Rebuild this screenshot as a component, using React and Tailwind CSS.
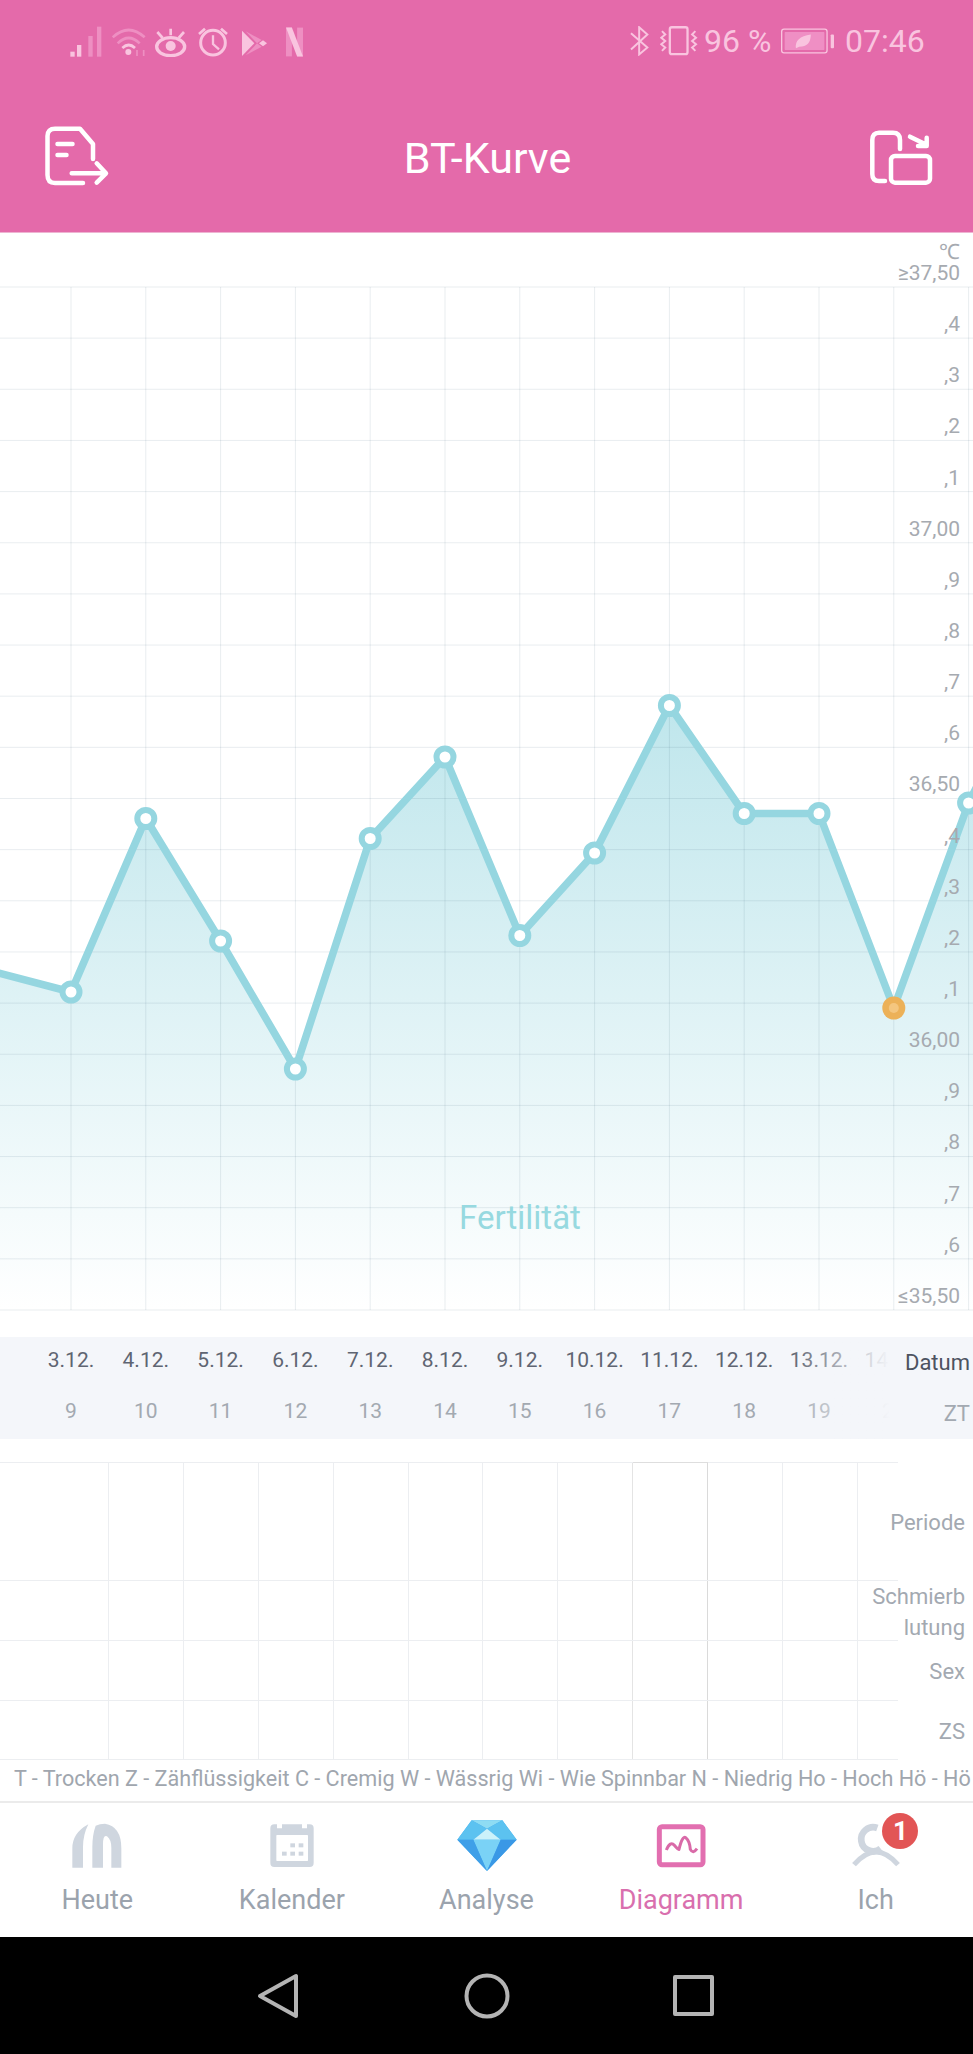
import React from "react";

const vx = Array.from({ length: 13 }, (_, i) => 71 + 74.8 * i);
const hy = Array.from({ length: 21 }, (_, i) => 287 + 51.15 * i);
const pts = [
  [-5, 972],
  [71, 992],
  [145.8, 818.5],
  [220.6, 941],
  [295.4, 1069],
  [370.2, 838.5],
  [445, 757],
  [519.8, 935.5],
  [594.6, 853],
  [669.4, 705.5],
  [744.2, 813.5],
  [819, 813.5],
  [893.8, 1008],
  [968.6, 803],
  [985, 770],
];
const line = pts.map((p) => p.join(",")).join(" ");
const area = `-5,1310 ${line} 985,1310`;

const yLabels = ["≥37,50", ",4", ",3", ",2", ",1", "37,00", ",9", ",8", ",7", ",6", "36,50", ",4", ",3", ",2", ",1", "36,00", ",9", ",8", ",7", ",6", "≤35,50"];
const dates = ["3.12.", "4.12.", "5.12.", "6.12.", "7.12.", "8.12.", "9.12.", "10.12.", "11.12.", "12.12.", "13.12.", "14.12."];
const days = ["9", "10", "11", "12", "13", "14", "15", "16", "17", "18", "19", "20"];
const tableRows = [
  { h: "h-[119px]", top: true },
  { h: "h-[60px]" },
  { h: "h-[60px]" },
  { h: "h-[59px]" },
];
const cells = Array.from({ length: 10 }, (_, i) => i);

function StatusLeft() {
  const c = "#f9c4df";
  const f = "#ee8fc2";
  return (
    <div className="flex items-center ml-[70px]">
      <svg width="32" height="31" viewBox="30 28 96 93">
        <rect x="31" y="105" width="13" height="15" fill={c} />
        <rect x="51" y="85" width="13" height="35" fill={c} />
        <rect x="85" y="58" width="13" height="62" fill={f} />
        <rect x="111" y="30" width="13" height="90" fill={f} />
      </svg>
      <svg className="ml-[10px]" width="35" height="31" viewBox="155 28 105 93" fill="none">
        <path d="M157 62 Q205 18 253 62" stroke={f} strokeWidth="8" />
        <path d="M172 80 Q205 48 238 80" stroke={f} strokeWidth="8" />
        <path d="M186 94 Q205 76 224 94" stroke={c} strokeWidth="8" />
        <circle cx="204" cy="106" r="9" fill={c} />
        <path d="M230 100 V118 M250 100 V118" stroke={f} strokeWidth="5" />
      </svg>
      <svg className="ml-[8px]" width="32" height="31" viewBox="285 28 96 93" fill="none" stroke={c}>
        <ellipse cx="332" cy="90" rx="42" ry="27" strokeWidth="10" />
        <circle cx="332" cy="88" r="15" fill={c} stroke="none" />
        <path d="M332 36 V56 M292 46 L308 64 M372 46 L356 64" strokeWidth="8" />
      </svg>
      <svg className="ml-[11px]" width="30" height="31" viewBox="415 28 90 93" fill="none" stroke={c}>
        <circle cx="460" cy="78" r="37" strokeWidth="9" />
        <path d="M460 56 V82 L478 98" strokeWidth="7" />
        <path d="M418 52 L436 36 M502 52 L484 36" strokeWidth="8" />
      </svg>
      <svg className="ml-[14px]" width="25" height="31" viewBox="545 28 75 93">
        <path d="M545 42 L582 80 L545 118 Z" fill={c} />
        <path d="M556 44 L604 70 L590 80 Z" fill={f} />
        <path d="M556 116 L604 90 L590 80 Z" fill={f} />
        <path d="M596 80 L608 71 L620 80 L608 89 Z" fill={c} />
      </svg>
      <svg className="ml-[19px]" width="17" height="31" viewBox="678 28 52 93">
        <rect x="678" y="32" width="18" height="88" fill={f} />
        <rect x="712" y="32" width="18" height="88" fill={f} />
        <path d="M678 32 H696 L730 120 H712 Z" fill={c} />
      </svg>
    </div>
  );
}

function StatusRight() {
  const c = "#f9c4df";
  return (
    <div className="flex items-center mr-[49px] text-[#f9c4df] text-[32px] leading-none">
      <svg width="19" height="30" viewBox="32 38 58 88" fill="none" stroke={c} strokeWidth="6">
        <path d="M35 58 L85 102 L60 123 V40 L85 62 L35 108" />
      </svg>
      <svg className="ml-[11px]" width="38" height="30" viewBox="122 35 116 90" fill="none" stroke={c}>
        <rect x="152" y="38" width="54" height="82" rx="6" strokeWidth="7" />
        <path d="M128 50 L138 60 L126 70 L138 80 L126 90 L138 100 L128 110" strokeWidth="6" />
        <path d="M230 50 L220 60 L232 70 L220 80 L232 90 L220 100 L230 110" strokeWidth="6" />
      </svg>
      <span className="ml-[6px] w-[66px] whitespace-nowrap">96 %</span>
      <svg className="ml-[11px]" width="53" height="26" viewBox="485 40 160 76" fill="none">
        <rect x="487" y="42" width="137" height="72" rx="7" stroke={c} strokeWidth="4" />
        <rect x="496" y="51" width="120" height="54" rx="2" fill="#ef8fc4" />
        <path d="M530 100 Q525 65 575 58 Q575 95 540 95 Z" fill={c} />
        <rect x="635" y="58" width="10" height="42" rx="3" fill={c} />
      </svg>
      <span className="ml-[11px] w-[79px] whitespace-nowrap">07:46</span>
    </div>
  );
}

function Header() {
  return (
    <div className="h-[233px] bg-[#e46aaa] flex flex-col border-b border-[#eeb4d2]">
      <div className="h-[82px] flex items-center justify-between">
        <StatusLeft />
        <StatusRight />
      </div>
      <div className="flex-1 flex items-center justify-between pl-[30px] pr-[28px] pt-[2px]">
        <svg width="90" height="85" viewBox="0 0 90 85" fill="none" stroke="#fff" strokeWidth="4.5" strokeLinecap="round" strokeLinejoin="round">
          <path d="M53 67 H25 Q17.5 67 17.5 59 V20 Q17.5 12.7 25 12.7 H50 L63 28 V43" />
          <path d="M27.5 28 H42.5 M27.5 39 H36.5" />
          <path d="M41.7 57.3 H75 M66.7 47.3 L76 57.3 L66.7 66.7" />
        </svg>
        <span className="text-white text-[43px] leading-none pt-[1px]">BT-Kurve</span>
        <svg width="90" height="85" viewBox="0 0 90 85" fill="none" stroke="#fff" strokeWidth="4.5" strokeLinecap="round" strokeLinejoin="round">
          <path d="M30 65 H24 Q17.3 65 17.3 58 V24 Q17.3 16.7 24 16.7 H38 Q45 16.7 45 24 V33" />
          <rect x="36" y="40" width="39" height="26.7" rx="4" />
          <path d="M55 20.7 L70 28 M71.7 21.7 V30 H63" />
        </svg>
      </div>
    </div>
  );
}

function Chart() {
  return (
    <div className="relative h-[1104px] overflow-hidden">
      <svg className="block" width="973" height="1104" viewBox="0 233 973 1104">
        <defs>
          <linearGradient id="fill" gradientUnits="userSpaceOnUse" x1="0" y1="705" x2="0" y2="1310">
            <stop offset="0" stopColor="#bfe6ec" />
            <stop offset="1" stopColor="#ffffff" />
          </linearGradient>
        </defs>
        <polygon points={area} fill="url(#fill)" />
        {hy.map((y) => (
          <line key={y} x1="0" x2="973" y1={y} y2={y} stroke="#2b4a6b" strokeOpacity="0.1" strokeWidth="1" />
        ))}
        {vx.map((x) => (
          <line key={x} x1={x} x2={x} y1="287" y2="1310" stroke="#2b4a6b" strokeOpacity="0.1" strokeWidth="1" />
        ))}
        <polyline points={line} fill="none" stroke="#95d6e0" strokeWidth="7.5" strokeLinejoin="round" />
        {pts.slice(1, 14).map(([x, y]) =>
          x === 893.8 ? (
            <g key={x}>
              <circle cx={x} cy={y} r="11.5" fill="#ecb158" />
              <circle cx={x} cy={y} r="5" fill="#f4c67f" />
            </g>
          ) : (
            <circle key={x} cx={x} cy={y} r="8.5" fill="#fff" stroke="#95d6e0" strokeWidth="6" />
          )
        )}
      </svg>
      <div className="absolute top-[15px] right-[13px] flex flex-col items-end text-[21px] leading-none text-[#a6aab0]">
        <span className="absolute top-[-6px] right-0">℃</span>
        {yLabels.map((l, i) => (
          <div key={i} className="h-[51.15px] flex items-center justify-end">
            {l}
          </div>
        ))}
      </div>
      <div className="absolute left-[450px] top-[968px] w-[140px] text-center text-[33px] leading-[34px] text-[#97d9e0]">Fertilität</div>
    </div>
  );
}

function DateBand() {
  return (
    <div className="relative h-[102px] bg-[#f4f6fa] overflow-hidden flex">
      <div className="relative w-[890px] shrink-0 overflow-hidden">
        <div className="flex h-[51px] pl-[33.6px] pb-[3px] items-center text-[21px] text-[#5f6572]">
          {dates.map((d) => (
            <div key={d} className="w-[74.8px] shrink-0 text-center whitespace-nowrap">
              {d}
            </div>
          ))}
        </div>
        <div className="flex h-[51px] pl-[33.6px] pb-[4px] items-center text-[21px] text-[#a3a9b1]">
          {days.map((d) => (
            <div key={d} className="w-[74.8px] shrink-0 text-center">
              {d}
            </div>
          ))}
        </div>
        <div className="absolute top-0 bottom-0 left-[790px] w-[100px] bg-gradient-to-r from-[#f4f6fa00] to-[#f4f6fa]" />
      </div>
      <div className="flex-1 flex flex-col items-end pr-[3px] text-[22px]">
        <div className="h-[51px] flex items-center text-[#4d5361]">Datum</div>
        <div className="h-[51px] flex items-center text-[#a3a9b1]">ZT</div>
      </div>
    </div>
  );
}

function Labels() {
  const labelCls = "w-[75px] shrink-0 text-[22px] leading-[31px] text-[#a3a9b1] text-right pr-[8px] pt-[1px]";
  const content = [
    <span>Periode</span>,
    <span className="block whitespace-nowrap">
      Schmierb
      <br />
      lutung
    </span>,
    <span>Sex</span>,
    <span>ZS</span>,
  ];
  return (
    <div className="mt-[23px] flex flex-col">
      {tableRows.map((r, ri) => (
        <div key={ri} className={`${r.h} flex`}>
          <div className={`w-[898px] shrink-0 flex border-b border-[#eceef1] ${r.top ? "border-t" : ""}`}>
            <div className="w-[109px] shrink-0 border-r border-[#eceef1]" />
            {cells.map((c) => (
              <div
                key={c}
                className={`w-[74.9px] shrink-0 border-r ${c === 7 ? "border-[#dadada]" : c === 6 ? "border-[#e4e4e4]" : "border-[#eceef1]"} ${c === 7 && r.top ? "shadow-[0_-1px_0_#dedede]" : ""}`}
              />
            ))}
          </div>
          <div className={`${labelCls} flex items-center justify-end`}>{content[ri]}</div>
        </div>
      ))}
    </div>
  );
}

function NavItem({ label, active, children, badge }) {
  return (
    <div className="relative flex-1 flex flex-col items-center pt-[18px]">
      <div className="h-[50px] flex items-center">{children}</div>
      <div className={`mt-[11px] text-[27px] leading-[36px] ${active ? "text-[#d96fae]" : "text-[#9ba3ad]"}`}>{label}</div>
      {badge && (
        <div className="absolute left-[104px] top-[10px] w-[36px] h-[36px] rounded-full bg-[#e25555] text-white text-[26px] font-bold flex items-center justify-center leading-none">
          {badge}
        </div>
      )}
    </div>
  );
}

function Nav() {
  const g = "#cfd6df";
  return (
    <div className="h-[136px] border-t-2 border-[#ebebeb] flex bg-white">
      <NavItem label="Heute">
        <svg width="60" height="50" viewBox="52 30 180 150">
          <path d="M68 170 V112 Q68 66 116 40 Q100 72 100 108 V170 Z" fill={g} />
          <path d="M128 170 V108 Q128 72 138 44 Q150 38 166 38 Q215 46 215 112 V170 H185 V110 Q185 86 172 76 Q160 70 160 100 V170 Z" fill={g} />
        </svg>
      </NavItem>
      <NavItem label="Kalender">
        <svg width="60" height="50" viewBox="635 30 180 150">
          <path d="M672 40 H680 V52 H695 V40 H755 V52 H770 V40 H778 Q790 40 790 52 V155 Q790 168 778 168 H672 Q660 168 660 155 V52 Q660 40 672 40 Z" fill={g} />
          <rect x="678" y="72" width="95" height="78" fill="#fff" rx="2" />
          <g fill={g}>
            <rect x="720" y="97" width="14" height="12" />
            <rect x="745" y="97" width="14" height="12" />
            <rect x="695" y="122" width="14" height="12" />
            <rect x="720" y="122" width="14" height="12" />
            <rect x="745" y="122" width="14" height="12" />
          </g>
        </svg>
      </NavItem>
      <NavItem label="Analyse">
        <svg className="ml-[2px]" width="60" height="52" viewBox="1221 29 180 156">
          <polygon points="1265,30 1357,30 1400,88 1311,182 1222,88" fill="#44aaf0" />
          <polygon points="1265,30 1357,30 1311,55" fill="#8edcf3" />
          <polygon points="1265,30 1311,55 1270,88 1222,88" fill="#5cc2f0" />
          <polygon points="1357,30 1311,55 1352,88 1400,88" fill="#5cc2f0" />
          <polygon points="1311,55 1352,88 1270,88" fill="#ccf2fa" />
          <polygon points="1270,88 1352,88 1311,182" fill="#7ad2f6" />
          <polygon points="1222,88 1270,88 1311,182" fill="#3f9fe8" />
          <polygon points="1400,88 1352,88 1311,182" fill="#3a98e6" />
        </svg>
      </NavItem>
      <NavItem label="Diagramm" active>
        <svg width="60" height="50" viewBox="34 45 180 150" fill="none">
          <rect x="59" y="62" width="131" height="114" rx="8" stroke="#e26fb0" strokeWidth="15" />
          <path d="M80 132 Q92 104 104 118 T118 130 Q128 88 138 95 Q150 105 152 130 Q160 145 172 128" stroke="#d96aa8" strokeWidth="9" />
        </svg>
      </NavItem>
      <NavItem label="Ich" badge="1">
        <svg width="60" height="50" viewBox="618 45 180 150" fill="none" stroke={g}>
          <path d="M712 66 A36 36 0 1 0 722 128" strokeWidth="20" />
          <path d="M642 176 Q708 100 774 176" strokeWidth="15" />
        </svg>
      </NavItem>
    </div>
  );
}

function SystemBar() {
  const s = "#b4b4b4";
  return (
    <div className="h-[117px] bg-black flex items-center">
      <svg className="ml-[257px]" width="42" height="46" viewBox="0 0 42 46" fill="none" stroke={s} strokeWidth="4" strokeLinejoin="round">
        <path d="M39 3 V43 L3 23 Z" />
      </svg>
      <svg className="ml-[165px]" width="46" height="46" viewBox="0 0 46 46" fill="none" stroke={s} strokeWidth="4">
        <circle cx="23" cy="23" r="20.5" />
      </svg>
      <svg className="ml-[163px]" width="41" height="41" viewBox="0 0 41 41" fill="none" stroke={s} strokeWidth="4" strokeLinejoin="round">
        <rect x="2" y="2" width="37" height="37" />
      </svg>
    </div>
  );
}

export default function App() {
  return (
    <div className="w-[973px] h-[2054px] overflow-hidden bg-white flex flex-col [font-family:Roboto,sans-serif]">
      <Header />
      <Chart />
      <DateBand />
      <Labels />
      <div className="h-[41px] pl-[14px] pb-[2px] flex items-center whitespace-nowrap overflow-hidden text-[21.6px] text-[#a0a6ae]">
        T - Trocken Z - Zähflüssigkeit C - Cremig W - Wässrig Wi - Wie Spinnbar N - Niedrig Ho - Hoch Hö - Hö
      </div>
      <Nav />
      <SystemBar />
    </div>
  );
}
